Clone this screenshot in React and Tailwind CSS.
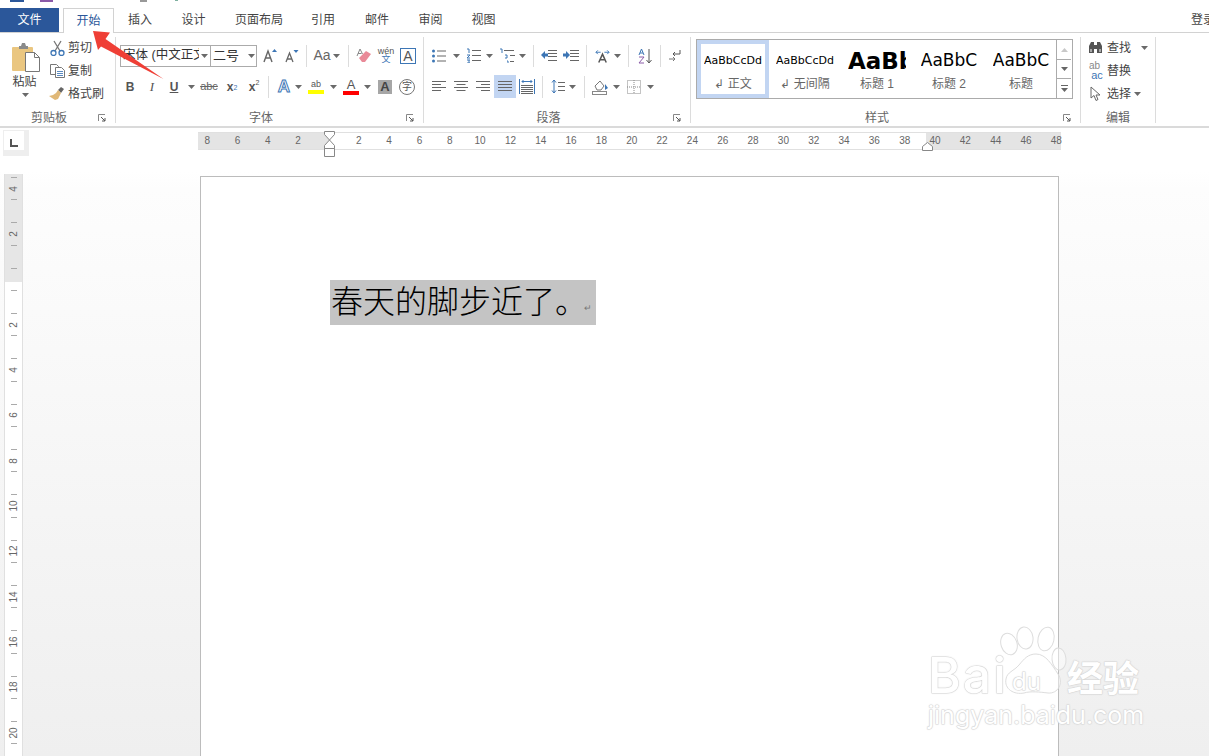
import React from "react";

const C = ({ className = "", children }) => (
  <div className={"flex items-center justify-center shrink-0 " + className}>{children}</div>
);
const Caret = ({ className = "" }) => (
  <C className={className}>
    <svg width="7" height="4" viewBox="0 0 7 4"><path d="M0 0h7L3.5 4z" fill="#6a6a6a" /></svg>
  </C>
);
const Sep = ({ className = "" }) => <div className={"w-px h-[22px] bg-[#dcdcdc] shrink-0 " + className} />;
const Launcher = () => (
  <div className="w-[17px] flex justify-start items-center shrink-0">
    <svg width="8" height="8" viewBox="0 0 8 8" fill="none">
      <path d="M.5 7V.5H7" stroke="#888" />
      <path d="M3 3l4 4M7 4v3H4" stroke="#555" />
    </svg>
  </div>
);
const Group = ({ className = "", label, launcher = true, children }) => (
  <div className={"h-[86px] shrink-0 flex flex-col border-r border-[#dcdcdc] " + className}>
    <div className="h-[72px] shrink-0">{children}</div>
    <div className="h-[17px] shrink-0 flex items-center text-[12px] text-[#666]">
      <div className="flex-1 text-center leading-none">{label}</div>
      {launcher ? <Launcher /> : null}
    </div>
  </div>
);
const Lines = ({ x = 0, rows, w = 14, stroke = "#666" }) =>
  rows.map((y, i) => <path key={i} d={`M${x} ${y + 0.5}h${Array.isArray(w) ? w[i] : w}`} stroke={stroke} />);

const Align = ({ widths, offs }) => (
  <svg width="14" height="11" viewBox="0 0 14 11">
    {[1, 4, 7, 10].map((y, i) => (
      <path key={i} d={`M${offs[i]} ${y - 0.5}h${widths[i]}`} stroke="#666" />
    ))}
  </svg>
);

const Style = ({ label, selected, className, children }) => (
  <div className={"w-[72px] h-[58px] shrink-0 flex flex-col items-center " + (selected ? "border-[4px] border-[#c2d5f2] -mb-px" : "pt-[4px] px-[4px]")}>
    <div className={"h-[30px] mt-[2px] shrink-0 flex items-center text-black font-['DejaVu_Sans',sans-serif] overflow-hidden " + className}>{children}</div>
    <div className="h-[20px] -mt-[2px] shrink-0 flex items-center text-[12px] text-[#666] whitespace-pre">{label}</div>
  </div>
);

const hNums = ["8", "6", "4", "2", "", "2", "4", "6", "8", "10", "12", "14", "16", "18", "20", "22", "24", "26", "28", "30", "32", "34", "36", "38", "40", "42", "44", "46", "48"];
const vNums = ["4", "2", "", "2", "4", "6", "8", "10", "12", "14", "16", "18", "20", ""];
const wm = "text-white [-webkit-text-stroke:1px_#dedede] [paint-order:stroke_fill] [text-shadow:0_0_2px_#cccccc] leading-none absolute";

export default function App() {
  return (
    <div className="relative w-[1209px] h-[756px] overflow-hidden bg-white flex flex-col text-[#444] font-['Liberation_Sans','Noto_Sans_CJK_SC',sans-serif]">
      {/* clipped quick access toolbar */}
      <div className="h-[8px] shrink-0 flex items-start overflow-hidden">
        <div className="ml-[10px] w-[14px] h-[2px] bg-[#2b579a]" />
        <div className="ml-[16px] w-[13px] h-[2px] bg-[#8a5aa8]" />
        <div className="ml-[87px] w-[7px] h-[2px] bg-[#999]" />
        <div className="ml-[28px] w-[3px] h-[1px] bg-[#7fb0a0]" />
      </div>

      {/* tabs */}
      <div className="h-[25px] shrink-0 flex items-stretch border-b border-[#d2d2d2] text-[12px] text-[#444]">
        <div className="w-[59px] shrink-0 bg-[#2b579a] text-white flex items-center justify-center">文件</div>
        <div className="ml-[4px] w-[51px] h-[25px] shrink-0 bg-white border border-[#d2d2d2] border-b-0 text-[#2b579a] flex items-center justify-center">开始</div>
        <C className="w-[52px]">插入</C>
        <C className="w-[55px]">设计</C>
        <C className="w-[76px]">页面布局</C>
        <C className="w-[52px]">引用</C>
        <C className="w-[56px]">邮件</C>
        <C className="w-[51px]">审阅</C>
        <C className="w-[55px]">视图</C>
        <div className="ml-[680px] w-[30px] flex items-center shrink-0 whitespace-nowrap">登录</div>
      </div>

      {/* ribbon */}
      <div className="h-[95px] shrink-0 flex items-start py-[4px] border-b-2 border-[#dadada] text-[12px]">
        {/* clipboard */}
        <Group className="w-[116px]" label="剪贴板">
          <div className="flex h-full">
            <div className="w-[49px] flex flex-col items-center pt-[4px]">
              <svg width="30" height="31" viewBox="0 0 30 31" className="ml-[2px]">
                <rect x="1" y="6" width="21" height="24" rx="1" fill="#eac680" />
                <path d="M8 5h2l1-3h3l1 3h2v3H8z" fill="#8a8a8a" />
                <path d="M14.5 11.5h9l5 5v14h-14z" fill="#fff" stroke="#777" />
                <path d="M23.500 11.500v5h5" fill="none" stroke="#777" />
              </svg>
              <div className="mt-[2px] leading-[16px] text-[#444]">粘贴</div>
              <Caret className="mt-[3px] ml-[2px]" />
            </div>
            <div className="flex flex-col -mt-px">
              {[
                [
                  "剪切",
                  <svg key="a" width="15" height="16" viewBox="0 0 15 16" fill="none">
                    <path d="M4 1l6 10M11 1L5 11" stroke="#777" strokeWidth="1.300" />
                    <circle cx="3.500" cy="13" r="2.500" stroke="#3d76b5" strokeWidth="1.300" />
                    <circle cx="11.500" cy="13" r="2.500" stroke="#3d76b5" strokeWidth="1.300" />
                  </svg>,
                ],
                [
                  "复制",
                  <svg key="b" width="15" height="14" viewBox="0 0 15 14" fill="none">
                    <path d="M.5.500h6l2 2v8h-8z" fill="#fff" stroke="#777" />
                    <path d="M5.500 3.500h6l3 3v7h-9z" fill="#fff" stroke="#777" />
                    <path d="M7 7.500h6M7 9.500h6M7 11.500h6" stroke="#5b8ac0" />
                  </svg>,
                ],
                [
                  "格式刷",
                  <svg key="c" width="16" height="15" viewBox="0 0 16 15" fill="none">
                    <path d="M9 4l3-3 3 2-3 4z" fill="#666" />
                    <path d="M9 4l3 3-3 6-3 1-6-4 4-1 3-2z" fill="#e0b877" />
                  </svg>,
                ],
              ].map(([t, ic]) => (
                <div key={t} className="h-[23px] flex items-center">
                  <C className="w-[16px]">{ic}</C>
                  <span className="ml-[3px] text-[#444] whitespace-nowrap">{t}</span>
                </div>
              ))}
            </div>
          </div>
        </Group>

        {/* font */}
        <Group className="w-[308px]" label="字体">
          <div className="pt-[7px] flex flex-col">
            <div className="flex items-center h-[23px] ml-[4px]">
              <div className="w-[91px] h-[22px] border border-[#ababab] flex items-center pl-[2px] overflow-hidden shrink-0">
                <span className="w-[76px] overflow-hidden whitespace-nowrap text-[#333] text-[12.500px]">宋体 (中文正文)</span>
                <Caret className="ml-[2px]" />
              </div>
              <div className="w-[46px] h-[22px] border border-l-0 border-[#ababab] flex items-center pl-[2px] shrink-0 text-[#333] text-[13px]">
                二号<Caret className="ml-[9px]" />
              </div>
              <C className="ml-[2px] w-[22px]">
                <svg width="15" height="15" viewBox="0 0 15 15">
                  <path d="M1 14L5 3l4 11M2.500 10h5" fill="none" stroke="#666" strokeWidth="1.400" />
                  <path d="M9 4l2.500-3L14 4z" fill="#3d76b5" />
                </svg>
              </C>
              <C className="w-[22px]">
                <svg width="14" height="14" viewBox="0 0 14 14">
                  <path d="M1 13l3.500-9L8 13M2 10h5" fill="none" stroke="#666" strokeWidth="1.300" />
                  <path d="M8.500 1h5L11 4z" fill="#3d76b5" />
                </svg>
              </C>
              <Sep className="ml-[3px]" />
              <C className="ml-[4px] w-[22px] text-[14px] text-[#666]">Aa</C>
              <Caret className="w-[7px]" />
              <Sep className="ml-[8px]" />
              <C className="ml-[4px] w-[22px]">
                <svg width="16" height="15" viewBox="0 0 16 15">
                  <path d="M3 10l7-7 5 3-6 8H6z" fill="#e98a98" />
                  <path d="M1 8l3-7 2.500 5M2 5.500h3.500" fill="none" stroke="#888" />
                </svg>
              </C>
              <C className="w-[22px] flex-col leading-none">
                <span className="text-[9px] text-[#555] leading-[8px]">wén</span>
                <span className="text-[9px] text-[#3d76b5] leading-[9px]">文</span>
              </C>
              <C className="w-[22px]">
                <div className="w-[16px] h-[16px] border border-[#3d76b5] flex items-center justify-center text-[14px] leading-none text-[#555]">A</div>
              </C>
            </div>
            <div className="flex items-center h-[23px] mt-[8px] ml-[3px]">
              <C className="w-[22px] font-bold text-[#555]">B</C>
              <C className="w-[22px] italic font-['Liberation_Serif',serif] text-[13px] text-[#555]">I</C>
              <C className="w-[22px] font-bold underline text-[#555]">U</C>
              <Caret className="w-[12px]" />
              <C className="w-[24px] text-[11px] line-through text-[#666]">abc</C>
              <C className="w-[22px] font-bold text-[#555]">x<sub className="text-[7px] font-normal text-[#3d76b5]">2</sub></C>
              <C className="w-[22px] font-bold text-[#555]">x<sup className="text-[7px] font-normal text-[#555]">2</sup></C>
              <Sep className="ml-[3px]" />
              <C className="ml-[7px] w-[16px] text-[17px] font-bold text-white [-webkit-text-stroke:1px_#3d76b5]">A</C>
              <Caret className="w-[12px]" />
              <C className="w-[24px]">
                <div className="flex flex-col items-center w-[16px]">
                  <span className="text-[9px] leading-[11px] text-[#555]">ab</span>
                  <div className="w-[16px] h-[4px] bg-[#ffff00]" />
                </div>
              </C>
              <Caret className="w-[10px]" />
              <C className="ml-[1px] w-[24px]">
                <div className="flex flex-col items-center w-[16px]">
                  <span className="text-[13px] leading-[12px] text-[#555]">A</span>
                  <div className="w-[16px] h-[4px] bg-[#ff0000]" />
                </div>
              </C>
              <Caret className="w-[8px]" />
              <C className="ml-[3px] w-[22px]">
                <div className="w-[14px] h-[14px] bg-[#a6a6a6] flex items-center justify-center text-[13px] font-bold text-[#444] leading-none">A</div>
              </C>
              <C className="w-[22px]">
                <div className="w-[16px] h-[16px] rounded-full border border-[#777] flex items-center justify-center text-[10px] leading-none text-[#555]">字</div>
              </C>
            </div>
          </div>
        </Group>

        {/* paragraph */}
        <Group className="w-[267px]" label="段落">
          <div className="pt-[7px] flex flex-col">
            <div className="flex items-center h-[23px]">
              <C className="ml-[8px] w-[14px]">
                <svg width="14" height="14" viewBox="0 0 14 14">
                  {[2, 7, 12].map((y) => <circle key={y} cx="1.500" cy={y} r="1.500" fill="#3d76b5" />)}
                  <Lines x={5} rows={[1.500, 6.500, 11.500]} w={9} />
                </svg>
              </C>
              <Caret className="ml-[6px] w-[8px]" />
              <C className="ml-[6px] w-[15px]">
                <svg width="15" height="15" viewBox="0 0 15 15">
                  <path d="M1 1h2v4M1 7h3L1 10h3M1 12h3M1 15h3M3 12v3" fill="none" stroke="#3d76b5" />
                  <Lines x={6} rows={[2, 7, 12]} w={9} />
                </svg>
              </C>
              <Caret className="ml-[4px] w-[8px]" />
              <C className="ml-[6px] w-[16px]">
                <svg width="16" height="15" viewBox="0 0 16 15">
                  <path d="M1 1h2v4" fill="none" stroke="#3d76b5" />
                  <path d="M6 7h2v3H6M8 13h1v2" fill="none" stroke="#3d76b5" />
                  <Lines x={5} rows={[2]} w={10} />
                  <Lines x={11} rows={[7, 13]} w={[5, 4]} />
                </svg>
              </C>
              <Caret className="ml-[3px] w-[8px]" />
              <Sep className="ml-[7px]" />
              <C className="ml-[7px] w-[16px]">
                <svg width="16" height="11" viewBox="0 0 16 11">
                  <Lines x={7} rows={[0, 3, 6, 10]} w={9} />
                  <path d="M0 5l4-4v2.500h3v3H4V9z" fill="#3d76b5" />
                </svg>
              </C>
              <C className="ml-[6px] w-[16px]">
                <svg width="16" height="11" viewBox="0 0 16 11">
                  <Lines x={7} rows={[0, 3, 6, 10]} w={9} />
                  <path d="M7 5L3 1v2.500H0v3h3V9z" fill="#3d76b5" />
                </svg>
              </C>
              <Sep className="ml-[7px]" />
              <C className="ml-[8px] w-[15px]">
                <svg width="16" height="14" viewBox="0 0 16 14" fill="none">
                  <path d="M4 14L8 5l4 9M5 11h6" stroke="#555" strokeWidth="1.600" />
                  <path d="M1 3h5M10 3h5" stroke="#3d76b5" />
                  <path d="M3 1L1 3l2 2M13 1l2 2-2 2" stroke="#3d76b5" />
                </svg>
              </C>
              <Caret className="ml-[3px] w-[8px]" />
              <Sep className="ml-[7px]" />
              <C className="ml-[9px] w-[14px]">
                <svg width="14" height="16" viewBox="0 0 14 16" fill="none">
                  <path d="M1 7l2.500-6L6 7M2 5h3" stroke="#3d76b5" />
                  <path d="M1 9h5L1 15h5" stroke="#8b5ca8" />
                  <path d="M11 1v14M8.500 12l2.500 3 2.500-3" stroke="#555" />
                </svg>
              </C>
              <Sep className="ml-[8px]" />
              <C className="ml-[7px] w-[14px]">
                <svg width="12" height="13" viewBox="0 0 12 13" fill="none">
                  <path d="M11 1v4H4M6 3L4 5l2 2" stroke="#555" />
                  <path d="M0 10h6M4 8l2 2-2 2" stroke="#777" />
                </svg>
              </C>
            </div>
            <div className="flex items-center h-[23px] mt-[8px]">
              <C className="ml-[8px] w-[14px]"><Align widths={[14, 9, 14, 9]} offs={[0, 0, 0, 0]} /></C>
              <C className="ml-[8px] w-[14px]"><Align widths={[14, 9, 14, 9]} offs={[0, 2.500, 0, 2.500]} /></C>
              <C className="ml-[8px] w-[14px]"><Align widths={[14, 9, 14, 9]} offs={[0, 5, 0, 5]} /></C>
              <C className="ml-[4px] w-[22px] h-[23px] bg-[#c2d5f2]"><Align widths={[14, 14, 14, 14]} offs={[0, 0, 0, 0]} /></C>
              <C className="ml-[3px] w-[16px]">
                <svg width="16" height="15" viewBox="0 0 16 15" fill="none">
                  <path d="M.5 0v15M15.500 0v15" stroke="#3d76b5" />
                  <path d="M3 2.500h10M4.500 1L3 2.500 4.500 4M11.500 1L13 2.500 11.500 4" stroke="#3d76b5" />
                  <Lines x={2} rows={[6, 8, 10, 12, 14]} w={12} />
                </svg>
              </C>
              <Sep className="ml-[7px]" />
              <C className="ml-[8px] w-[14px]">
                <svg width="14" height="15" viewBox="0 0 14 15" fill="none">
                  <path d="M3 1v13M1 3.500L3 1l2 2.500M1 11.500L3 14l2-2.500" stroke="#3d76b5" />
                  <Lines x={7} rows={[3, 7, 11]} w={7} />
                </svg>
              </C>
              <Caret className="ml-[3px] w-[8px]" />
              <Sep className="ml-[8px]" />
              <C className="ml-[7px] w-[17px]">
                <svg width="17" height="16" viewBox="0 0 17 16" fill="none">
                  <path d="M3 7l5-5 4 5-3 4H5z" fill="#fff" stroke="#777" />
                  <path d="M13 5l3 4-3 2z" fill="#3d76b5" />
                  <rect x=".5" y="12.500" width="14" height="3" stroke="#888" />
                </svg>
              </C>
              <Caret className="ml-[3px] w-[8px]" />
              <C className="ml-[7px] w-[14px]">
                <svg width="14" height="14" viewBox="0 0 14 14" fill="none">
                  <rect x=".5" y=".5" width="13" height="13" stroke="#888" strokeDasharray="1 1" />
                  <path d="M7 0v14M0 7h14" stroke="#888" strokeDasharray="1 1" />
                </svg>
              </C>
              <Caret className="ml-[5px] w-[8px]" />
            </div>
          </div>
        </Group>

        {/* styles */}
        <Group className="w-[390px]" label="样式">
          <div className="ml-[5px] mt-[2px] w-[377px] h-[60px] border border-[#ababab] flex">
            <Style selected label="↲ 正文" className="justify-center text-[11px]">AaBbCcDd</Style>
            <Style label="↲ 无间隔" className="justify-center text-[11px]">AaBbCcDd</Style>
            <Style label="标题 1" className="justify-start text-[23px] font-bold w-[58px]">AaBbC</Style>
            <Style label="标题 2" className="justify-center text-[17px]">AaBbC</Style>
            <Style label="标题" className="justify-center text-[17px]">AaBbC</Style>
            <div className="w-[15px] ml-[-1px] shrink-0 border-l border-[#ababab] flex flex-col">
              <C className="h-[20px] border-b border-[#ababab]">
                <svg width="7" height="4" viewBox="0 0 7 4"><path d="M0 4h7L3.500 0z" fill="#c8c8c8" /></svg>
              </C>
              <C className="h-[19px] border-b border-[#ababab]">
                <svg width="7" height="4" viewBox="0 0 7 4"><path d="M0 0h7L3.500 4z" fill="#666" /></svg>
              </C>
              <C className="h-[19px]">
                <svg width="7" height="7" viewBox="0 0 7 7"><path d="M0 0h7v1H0zM0 3h7L3.500 7z" fill="#666" /></svg>
              </C>
            </div>
          </div>
        </Group>

        {/* editing */}
        <Group className="w-[75px]" label="编辑" launcher={false}>
          <div className="flex flex-col -mt-px pl-[7px]">
            <div className="h-[23px] flex items-center">
              <C className="w-[15px]">
                <svg width="15" height="13" viewBox="0 0 15 13">
                  <path d="M1 12V5l2-4h3v11zM9 12V1h3l2 4v7zM6 4h3v4H6z" fill="#555" />
                  <path d="M3 8v3M12 8v3" stroke="#fff" />
                </svg>
              </C>
              <span className="ml-[4px] whitespace-nowrap">查找</span>
              <Caret className="ml-[10px]" />
            </div>
            <div className="h-[23px] flex items-center">
              <C className="w-[16px] flex-col leading-none">
                <span className="text-[10px] leading-[8px] text-[#888] -ml-[3px]">ab</span>
                <span className="text-[11px] leading-[10px] text-[#3d76b5] ml-[2px]">ac</span>
              </C>
              <span className="ml-[3px] whitespace-nowrap">替换</span>
            </div>
            <div className="h-[23px] flex items-center">
              <C className="w-[15px]">
                <svg width="11" height="15" viewBox="0 0 11 15" fill="none">
                  <path d="M1 1v11l3-2.500 2 5 2-1-2-4.500h4z" fill="#fff" stroke="#666" />
                </svg>
              </C>
              <span className="ml-[4px] whitespace-nowrap">选择</span>
              <Caret className="ml-[3px]" />
            </div>
          </div>
        </Group>
      </div>

      {/* lower area */}
      <div className="flex-1 flex flex-col bg-[linear-gradient(#ffffff_44px,#fdfdfd_60px,#efefef_100%)] overflow-hidden">
        <div className="h-[44px] shrink-0 flex items-start pt-[4px]">
          <div className="ml-[3px] -mt-[2px] w-[26px] h-[26px] bg-[#eeeeee] shrink-0">
            <div className="ml-px mt-px w-[20px] h-[19px] bg-white flex items-end justify-center pb-[3px]">
              <div className="w-[8px] h-[8px] border-l-2 border-b-2 border-[#555]" />
            </div>
          </div>
          <div className="relative ml-[169px] w-[863px] h-[18px] shrink-0 border-y border-[#e0e0e0] bg-[linear-gradient(90deg,#e4e4e4_132px,#ffffff_132px,#ffffff_728px,#e4e4e4_728px)]">
            <div className="flex ml-[-6px] h-full items-center text-[10px] text-[#666]">
              {hNums.map((n, i) => (
                <div key={i} className="w-[30.33px] shrink-0 text-center leading-none">{n}</div>
              ))}
            </div>
            <svg className="absolute left-[125px] top-[-2px]" width="14" height="27" viewBox="0 0 14 27" fill="none">
              <path d="M1.500 .5h10v3L6.500 9l-5-5.500zM6.500 9l5 5.500v3h-10v-3zM1.500 17.500h10v8h-10z" fill="#fff" stroke="#888" />
            </svg>
            <svg className="absolute left-[724px] top-[9px]" width="12" height="9" viewBox="0 0 12 9" fill="none">
              <path d="M.5 8.500v-4l5-4 5 4v4z" fill="#fff" stroke="#888" />
            </svg>
          </div>
        </div>

        <div className="flex flex-1 items-start min-h-0">
          <div className="ml-[4px] mt-[2px] w-[19px] h-[590px] shrink-0 border-x border-[#e0e0e0] overflow-hidden bg-[linear-gradient(#e6e6e6_108px,#ffffff_108px)] flex flex-col">
            <div className="flex flex-col mt-[-8px] items-center text-[10px] text-[#666]">
              {vNums.map((n, i) => (
                <div key={i} className="h-[45.33px] shrink-0 w-full flex flex-col items-center justify-between py-[11px]">
                  <div className="w-[6px] h-px bg-[#aaa]" />
                  <div className="-rotate-90 leading-none h-[10px] flex items-center">{n}</div>
                  <div className="w-[6px] h-px bg-[#aaa]" />
                </div>
              ))}
            </div>
          </div>
          <div className="ml-[177px] mt-[4px] w-[859px] h-[620px] shrink-0 bg-white border border-[#bcbcbc] pl-[129px] pt-[103px]">
            <div className="w-[266px] h-[45px] bg-[#c4c4c4] flex items-center pl-px pb-[8px] text-black text-[32px] font-light leading-none whitespace-nowrap font-['Noto_Sans_CJK_SC',sans-serif]">
              春天的脚步近了。
              <span className="-ml-[3px] mt-[18px] text-[9px] text-[#777]">↵</span>
            </div>
          </div>
        </div>
      </div>

      {/* red annotation arrow */}
      <svg className="absolute left-0 top-0 pointer-events-none" width="200" height="100" viewBox="0 0 200 100">
        <path d="M93 31l17 1.500-4.500 6.500 58 40-62.500-32.500-3 3.500z" fill="#ef3f36" />
      </svg>

      {/* baidu watermark */}
      <div className="absolute left-[926px] top-[626px] w-[222px] h-[106px] pointer-events-none">
        <svg className="absolute left-0 top-0" width="222" height="70" viewBox="0 0 222 70" fill="none">
          <g fill="#ffffff" fillOpacity=".45" stroke="#dddddd" strokeWidth="1">
            <ellipse cx="83" cy="18" rx="8" ry="11" transform="rotate(-18 83 18)" />
            <ellipse cx="99" cy="12" rx="8" ry="11" transform="rotate(-8 99 12)" />
            <ellipse cx="120" cy="13" rx="8" ry="12" transform="rotate(12 120 13)" />
            <ellipse cx="133" cy="33" rx="7" ry="11" transform="rotate(-5 133 33)" />
            <path d="M110 28c10 0 16 11 22 20 6 9 0 20-10 19-8-1-18-2-24 0-10 2-20-4-18-14 1-7 8-8 13-14 5-6 9-11 17-11z" />
          </g>
        </svg>
        <div className={wm + " left-[2px] top-[24px] text-[50px] font-['Inter',sans-serif] tracking-[2px] font-medium"}>Bai</div>
        <div className={wm + " left-[86px] top-[44px] text-[24px] font-['Inter',sans-serif]"}>du</div>
        <div className={wm + " left-[141px] top-[32px] text-[36px] font-bold font-['Noto_Sans_CJK_SC',sans-serif]"}>经验</div>
        <div className={wm + " left-[2px] top-[77px] text-[25px] font-['Inter',sans-serif] whitespace-nowrap"}>jingyan.baidu.com</div>
      </div>
    </div>
  );
}
